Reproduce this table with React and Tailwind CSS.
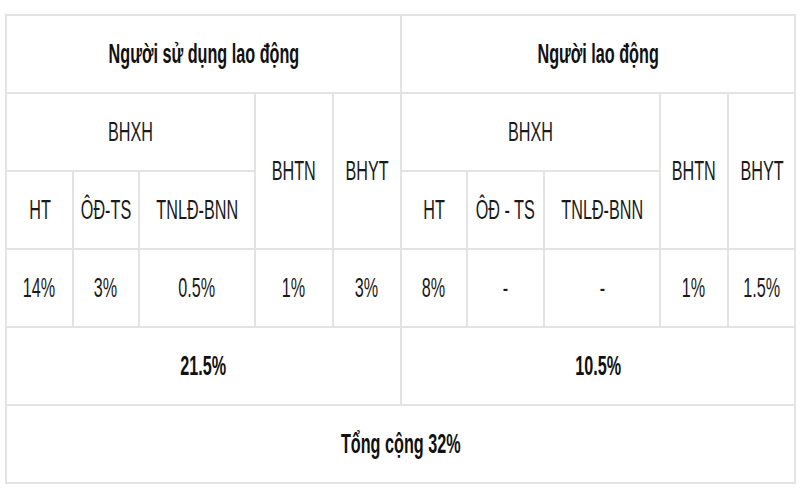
import React from "react";

const cell = "border-2 border-[#e3e3e3] h-[78px] p-0 text-center align-middle";

// text in the picture is tall and narrow: scale it down on x only
const T = ({ children, bold }) => (
  <div className="flex justify-center">
    <span
      className={`inline-block shrink-0 whitespace-nowrap scale-x-[0.6] text-[27px] leading-none ${
        bold ? "font-bold text-[#111]" : "font-normal text-[#1a1a1a]"
      }`}
    >
      {children}
    </span>
  </div>
);

const App = () => {
  const left = ["14%", "3%", "0.5%", "1%", "3%"];
  const right = ["8%", "-", "-", "1%", "1.5%"];

  return (
    <div className="w-[800px] h-[500px] bg-white pt-[14px] pl-[5px] font-['Liberation_Sans',Arial,sans-serif]">
      <table className="table-fixed border-collapse w-[789px]">
        <colgroup>
          <col className="w-[67px]" />
          <col className="w-[66px]" />
          <col className="w-[116px]" />
          <col className="w-[78px]" />
          <col className="w-[68px]" />
          <col className="w-[66px]" />
          <col className="w-[77px]" />
          <col className="w-[116px]" />
          <col className="w-[68px]" />
          <col className="w-[67px]" />
        </colgroup>
        <tbody>
          {/* Heading */}
          <tr>
            <td colSpan={5} className={cell}>
              <T bold>Người sử dụng lao động</T>
            </td>
            <td colSpan={5} className={cell}>
              <T bold>Người lao động</T>
            </td>
          </tr>

          {/* Group row */}
          <tr>
            <td colSpan={3} className={cell}>
              <T>BHXH</T>
            </td>
            <td rowSpan={2} className={cell}>
              <T>BHTN</T>
            </td>
            <td rowSpan={2} className={cell}>
              <T>BHYT</T>
            </td>
            <td colSpan={3} className={cell}>
              <T>BHXH</T>
            </td>
            <td rowSpan={2} className={cell}>
              <T>BHTN</T>
            </td>
            <td rowSpan={2} className={cell}>
              <T>BHYT</T>
            </td>
          </tr>

          <tr>
            <td className={cell}>
              <T>HT</T>
            </td>
            <td className={cell}>
              <T>ÔĐ-TS</T>
            </td>
            <td className={cell}>
              <T>TNLĐ-BNN</T>
            </td>
            <td className={cell}>
              <T>HT</T>
            </td>
            <td className={cell}>
              <T>ÔĐ - TS</T>
            </td>
            <td className={cell}>
              <T>TNLĐ-BNN</T>
            </td>
          </tr>

          {/* Rates */}
          <tr>
            {left.map((v, i) => (
              <td key={"l" + i} className={cell}>
                <T>{v}</T>
              </td>
            ))}
            {right.map((v, i) => (
              <td key={"r" + i} className={cell}>
                <T>{v}</T>
              </td>
            ))}
          </tr>

          <tr>
            <td colSpan={5} className={cell}>
              <T bold>21.5%</T>
            </td>
            <td colSpan={5} className={cell}>
              <T bold>10.5%</T>
            </td>
          </tr>

          <tr>
            <td colSpan={10} className={cell}>
              <T bold>Tổng cộng 32%</T>
            </td>
          </tr>
        </tbody>
      </table>
    </div>
  );
};

export default App;
